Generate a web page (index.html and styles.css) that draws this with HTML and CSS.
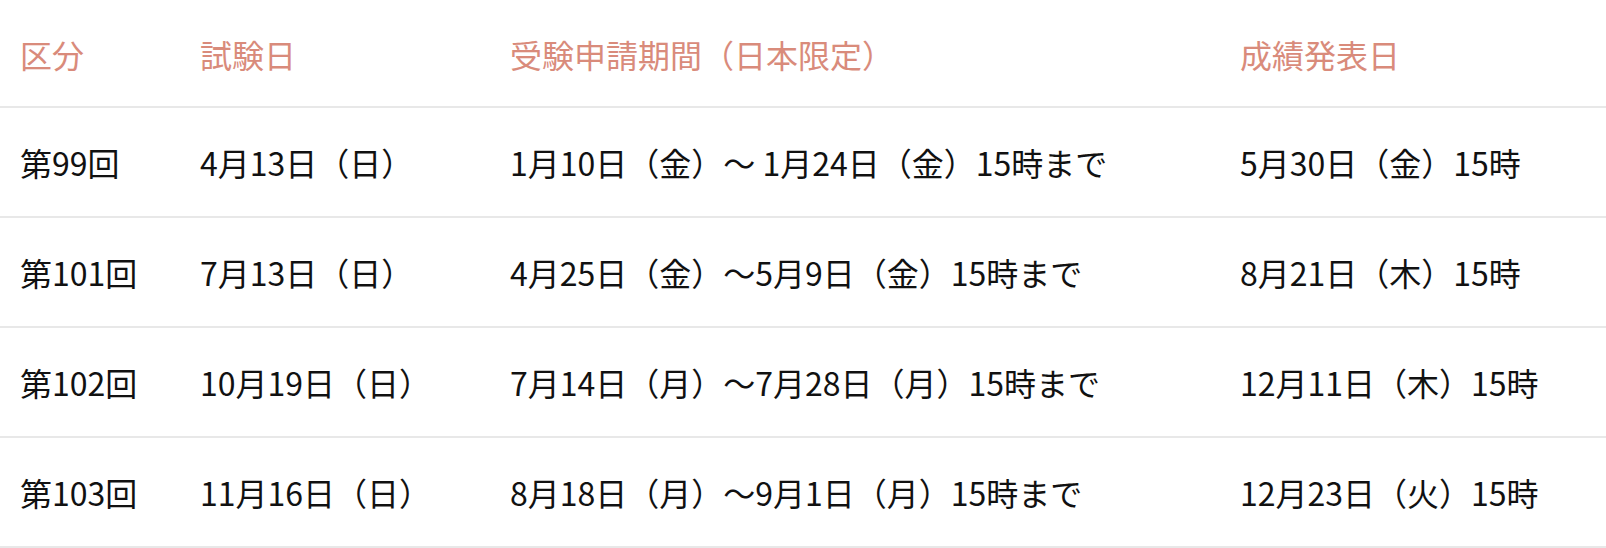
FILE: index.html
```html
<!DOCTYPE html>
<html lang="ja">
<head>
<meta charset="utf-8">
<title>試験日程</title>
<link rel="stylesheet" href="styles.css">
</head>
<body>
<table class="schedule">
  <colgroup>
    <col class="c1"><col class="c2"><col class="c3"><col class="c4">
  </colgroup>
  <thead>
    <tr>
      <th>区分</th>
      <th>試験日</th>
      <th>受験申請期間（日本限定）</th>
      <th>成績発表日</th>
    </tr>
  </thead>
  <tbody>
    <tr>
      <td>第99回</td>
      <td>4月13日（日）</td>
      <td>1月10日（金）〜 1月24日（金）15時まで</td>
      <td>5月30日（金）15時</td>
    </tr>
    <tr>
      <td>第101回</td>
      <td>7月13日（日）</td>
      <td>4月25日（金）〜5月9日（金）15時まで</td>
      <td>8月21日（木）15時</td>
    </tr>
    <tr>
      <td>第102回</td>
      <td>10月19日（日）</td>
      <td>7月14日（月）〜7月28日（月）15時まで</td>
      <td>12月11日（木）15時</td>
    </tr>
    <tr>
      <td>第103回</td>
      <td>11月16日（日）</td>
      <td>8月18日（月）〜9月1日（月）15時まで</td>
      <td>12月23日（火）15時</td>
    </tr>
  </tbody>
</table>
</body>
</html>
```
FILE: styles.css
```css
html, body {
  margin: 0;
  padding: 0;
  background: #ffffff;
}
body {
  font-family: "Noto Sans CJK JP", "Noto Sans", sans-serif;
  font-size: 32px;
  color: #111111;
}
.schedule {
  width: 100%;
  border-collapse: collapse;
  table-layout: fixed;
}
.c1 { width: 180px; }
.c2 { width: 310px; }
.c3 { width: 730px; }
.schedule th,
.schedule td {
  text-align: left;
  font-weight: 400;
  line-height: 48px;
  padding: 30px 0 30px 20px;
  border-bottom: 2px solid #e8e8e8;
  white-space: nowrap;
}
.schedule th {
  color: #d98b7b;
  padding-top: 30px;
  padding-bottom: 28px;
}
```
